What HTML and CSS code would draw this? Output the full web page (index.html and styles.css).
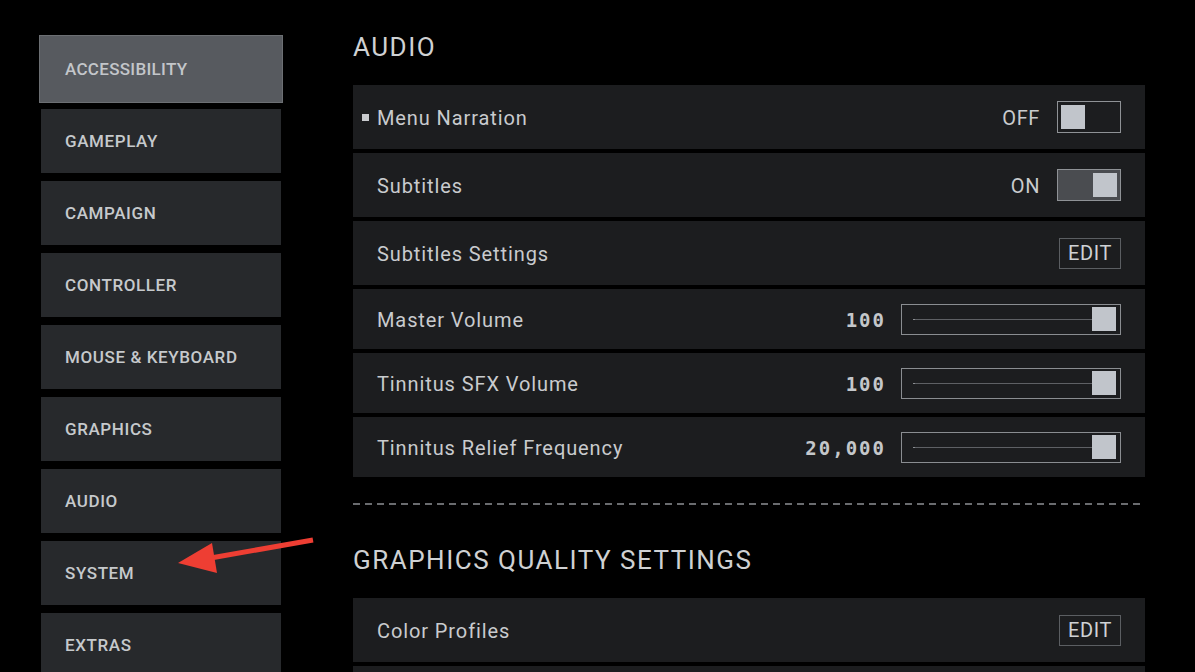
FILE: index.html
```html
<!DOCTYPE html>
<html>
<head>
<meta charset="utf-8">
<link rel="stylesheet" href="styles.css">
</head>
<body>
<div class="page">
  <nav class="nav">
    <div class="nav-item selected">ACCESSIBILITY</div>
    <div class="nav-item">GAMEPLAY</div>
    <div class="nav-item">CAMPAIGN</div>
    <div class="nav-item">CONTROLLER</div>
    <div class="nav-item">MOUSE &amp; KEYBOARD</div>
    <div class="nav-item">GRAPHICS</div>
    <div class="nav-item">AUDIO</div>
    <div class="nav-item">SYSTEM</div>
    <div class="nav-item">EXTRAS</div>
  </nav>
  <main class="main">
    <h2 class="heading">AUDIO</h2>
    <div class="rows">
      <div class="row tall">
        <span class="label"><span class="bullet"></span>Menu Narration</span>
        <div class="control">
          <span class="state">OFF</span>
          <span class="toggle"><span class="knob"></span></span>
        </div>
      </div>
      <div class="row tall">
        <span class="label">Subtitles</span>
        <div class="control">
          <span class="state">ON</span>
          <span class="toggle on"><span class="knob"></span></span>
        </div>
      </div>
      <div class="row tall">
        <span class="label">Subtitles Settings</span>
        <div class="control">
          <span class="edit">EDIT</span>
        </div>
      </div>
      <div class="row short">
        <span class="label">Master Volume</span>
        <div class="control">
          <span class="value">100</span>
          <span class="slider"><span class="track"></span><span class="knob"></span></span>
        </div>
      </div>
      <div class="row short">
        <span class="label">Tinnitus SFX Volume</span>
        <div class="control">
          <span class="value">100</span>
          <span class="slider"><span class="track"></span><span class="knob"></span></span>
        </div>
      </div>
      <div class="row short">
        <span class="label">Tinnitus Relief Frequency</span>
        <div class="control">
          <span class="value">20,000</span>
          <span class="slider"><span class="track"></span><span class="knob"></span></span>
        </div>
      </div>
    </div>
    <div class="dashes"></div>
    <h2 class="heading second">GRAPHICS QUALITY SETTINGS</h2>
    <div class="rows">
      <div class="row tall">
        <span class="label">Color Profiles</span>
        <div class="control">
          <span class="edit">EDIT</span>
        </div>
      </div>
      <div class="row stub"></div>
    </div>
  </main>
</div>
<svg class="arrow" width="1195" height="672" viewBox="0 0 1195 672">
  <line x1="313" y1="540" x2="205" y2="559" stroke="#ee3e33" stroke-width="5"/>
  <polygon points="178,563 212,543 217,573" fill="#ee3e33"/>
</svg>
</body>
</html>
```

FILE: styles.css
```css
html, body {
  margin: 0;
  padding: 0;
  background: #000;
  width: 1195px;
  height: 672px;
  overflow: hidden;
}

.page {
  display: flex;
  gap: 70px;
  padding-left: 39px;
  height: 672px;
  overflow: hidden;
  font-family: Roboto, "Liberation Sans", sans-serif;
  color: #c8cbce;
}

.nav {
  display: flex;
  flex-direction: column;
  width: 244px;
  padding-top: 35px;
  flex-shrink: 0;
}

.nav-item {
  box-sizing: border-box;
  height: 64px;
  flex-shrink: 0;
  margin: 0 2px 8px 2px;
  background: #27292c;
  display: flex;
  align-items: center;
  padding-left: 24px;
  font-size: 17px;
  font-weight: 500;
  color: #c6c9cc;
  letter-spacing: 0.6px;
}

.nav-item.selected {
  height: 68px;
  margin: 0 0 6px 0;
  padding-left: 25px;
  background: #575a5f;
  border: 1px solid #6c6f73;
  color: #c3c6ca;
  letter-spacing: 0.3px;
}

.main {
  width: 792px;
  display: flex;
  flex-direction: column;
}

.main > * {
  flex-shrink: 0;
}

.heading {
  margin: 28px 0 19px 0;
  line-height: 38px;
  font-size: 26px;
  font-weight: 400;
  letter-spacing: 1.5px;
  color: #cfd1d3;
}

.heading.second {
  margin-top: 36px;
}

.rows {
  display: flex;
  flex-direction: column;
  gap: 4px;
}

.row {
  box-sizing: border-box;
  background: #1c1d1f;
  display: flex;
  align-items: center;
  justify-content: space-between;
  padding: 0 24px;
  flex-shrink: 0;
}

.row.tall { height: 64px; }
.row.short { height: 60px; }
.row.stub { height: 40px; }

.label {
  position: relative;
  top: 1px;
  font-size: 20px;
  letter-spacing: 0.9px;
  color: #c9cbce;
}

.bullet {
  position: absolute;
  left: -15px;
  top: 8px;
  width: 7px;
  height: 7px;
  background: #c9cbce;
}

.control {
  display: flex;
  align-items: center;
  gap: 17px;
}

.state {
  font-size: 20px;
  letter-spacing: 0.6px;
  color: #c9cbce;
  position: relative;
  top: 1px;
}

.toggle {
  box-sizing: border-box;
  width: 64px;
  height: 32px;
  border: 1px solid #8f9296;
  padding: 3px;
  display: flex;
  justify-content: flex-start;
}

.toggle.on {
  background: #4a4c50;
  justify-content: flex-end;
}

.toggle .knob,
.slider .knob {
  width: 24px;
  height: 24px;
  background: #c1c5cb;
  display: block;
}

.edit {
  box-sizing: border-box;
  width: 62px;
  height: 31px;
  border: 1px solid #5b5e62;
  display: flex;
  align-items: center;
  justify-content: center;
  font-size: 20px;
  letter-spacing: 0.6px;
  color: #cfd2d5;
}

.value {
  font-family: "DejaVu Sans Mono", "Liberation Mono", monospace;
  font-weight: bold;
  font-size: 19px;
  letter-spacing: 2px;
  margin-right: -2px;
  color: #c4c7ca;
  position: relative;
  top: 1px;
}

.slider {
  box-sizing: border-box;
  width: 220px;
  height: 31px;
  border: 1px solid #8a8d91;
  display: flex;
  align-items: center;
  padding: 0 4px 0 11px;
}

.track {
  flex: 1;
  height: 1px;
  background: #5e6064;
  border-left: 2px solid #8a8d91;
}

.dashes {
  margin-top: 26px;
  height: 2px;
  background: repeating-linear-gradient(to right, #6a6c6f 0 7px, transparent 7px 12px);
}

.arrow {
  position: absolute;
  left: 0;
  top: 0;
  pointer-events: none;
}
```
